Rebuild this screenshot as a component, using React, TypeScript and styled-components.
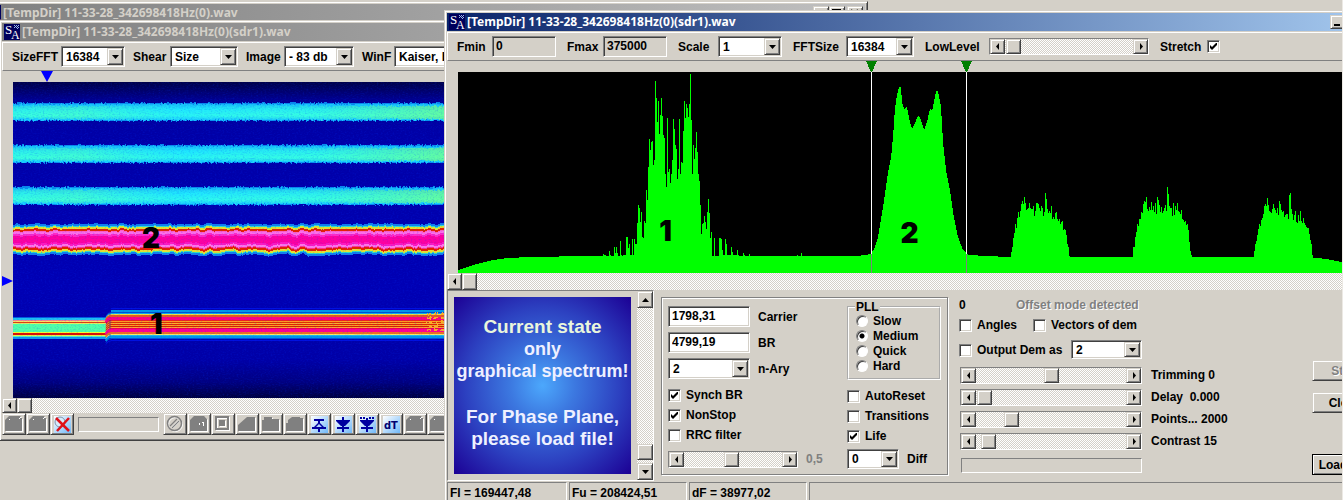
import React, { useId } from "react";
import styled, { createGlobalStyle, css } from "styled-components";

const face = "#d4d0c8";
const shadow = "#808080";
const dark = "#404040";
const uiFont = '"Liberation Sans", Arial, sans-serif';
const titleFont = '"Noto Sans", "DejaVu Sans Condensed", sans-serif';

const raised = css`
  border: 1px solid;
  border-color: ${face} ${dark} ${dark} ${face};
  box-shadow: inset 1px 1px 0 #fff, inset -1px -1px 0 ${shadow};
  background: ${face};
`;
const sunken = css`
  border: 1px solid;
  border-color: ${shadow} #fff #fff ${shadow};
  box-shadow: inset 1px 1px 0 ${dark}, inset -1px -1px 0 ${face};
`;
const dither = css`
  background: repeating-conic-gradient(#fff 0 25%, ${face} 0 50%) 0 0 / 2px 2px;
`;

const GlobalStyle = createGlobalStyle`
  * { box-sizing: border-box; }
  body { margin: 0; background: ${face}; font: bold 12px/14px ${uiFont}; color: #000; }
  button, input, select { font: inherit; color: inherit; margin: 0; }
`;

/* ---------- windows ---------- */

const Desktop = styled.main`
  position: relative;
  height: 100vh;
  overflow: hidden;
  border-right: 1px solid #ece9e4;
`;

const WindowFrame = styled.section`
  position: absolute;
  display: flex;
  flex-direction: column;
  padding: 2px;
  border: 1px solid;
  border-color: ${face} ${dark} ${dark} ${face};
  box-shadow: inset 1px 1px 0 #fff, inset -1px -1px 0 ${shadow};
  background: ${face};
`;
const RootWindow = styled(WindowFrame)`
  left: -20px;
  top: 1px;
  width: calc(65% + 16px);
  height: 400px;
`;
const WaterfallWindow = styled(WindowFrame)`
  left: -1px;
  top: 20px;
  width: 64%;
`;
const SpectrumWindow = styled(WindowFrame)`
  left: 444px;
  right: -43px;
  top: 10px;
`;

const TitleBar = styled.header<{ $active?: boolean }>`
  display: flex;
  align-items: center;
  gap: 2px;
  height: 18px;
  margin-bottom: 1px;
  padding: 0 2px;
  background: ${(p) =>
    p.$active
      ? "linear-gradient(90deg, #0a246a, #a6caf0)"
      : "linear-gradient(90deg, #808080, #c0c0c0)"};
  color: ${(p) => (p.$active ? "#fff" : face)};
`;
const TitleText = styled.h1`
  flex: 1;
  margin: 0;
  font: bold 12px/18px ${titleFont};
  white-space: nowrap;
`;
const CaptionButton = styled.button`
  ${raised}
  width: 16px;
  height: 14px;
  padding: 0;
  display: grid;
  place-items: center;
  color: #000;
`;
const CaptionGroup = styled.div`
  display: flex;
`;

const AppIcon = () => (
  <svg width="16" height="16" viewBox="0 0 16 16" aria-hidden="true">
    <rect width="16" height="16" fill="#00005c" />
    <text x="1" y="10" fontFamily="Liberation Serif, serif" fontSize="13" fontWeight="400" fill="#fff">S</text>
    <text x="7" y="15" fontFamily="Liberation Serif, serif" fontSize="12" fontWeight="400" fill="#fff">A</text>
    <path d="M10 1h1v1h-1zM12 1h1v1h-1zM14 1h1v1h-1zM11 2h1v1h-1zM13 2h1v1h-1zM10 3h1v1h-1zM12 3h1v1h-1zM14 3h1v1h-1zM13 4h1v1h-1z" fill="#9ab8e8" />
  </svg>
);

const Title = ({ text, active }: { text: string; active?: boolean }) => (
  <TitleBar $active={active}>
    <AppIcon />
    <TitleText>{text}</TitleText>
    <CaptionGroup>
      <CaptionButton aria-label="Minimize">
        <svg width="10" height="9"><path d="M1 6h6v2H1z" /></svg>
      </CaptionButton>
      <CaptionButton aria-label="Maximize">
        <svg width="10" height="9"><path d="M0 0h9v9H0zM1 2v6h7V2z" fillRule="evenodd" /></svg>
      </CaptionButton>
    </CaptionGroup>
    <CaptionButton aria-label="Close">
      <svg width="10" height="9"><path d="M1 1l7 7M8 1l-7 7" stroke="#000" strokeWidth="2" /></svg>
    </CaptionButton>
  </TitleBar>
);

/* ---------- controls ---------- */

const Toolbar = styled.div<{ $gap: number }>`
  display: flex;
  align-items: center;
  gap: ${(p) => p.$gap}px;
  height: 29px;
  padding-left: 9px;
  border: 1px solid;
  border-color: #fff ${shadow} ${shadow} #fff;
  overflow: hidden;
`;
const Field = styled.label<{ $label: number }>`
  display: grid;
  flex: none;
  grid-template-columns: ${(p) => p.$label}px auto;
  align-items: center;
  white-space: nowrap;
`;
const FieldAfter = styled.label`
  display: flex;
  align-items: center;
  gap: 8px;
  white-space: nowrap;
`;
const TextInput = styled.input<{ $w: number; $flat?: boolean }>`
  ${sunken}
  width: ${(p) => p.$w}px;
  height: 21px;
  padding: 0 3px 2px;
  border-radius: 0;
  outline: none;
  background: ${(p) => (p.$flat ? face : "#fff")};
`;
const SelectWrap = styled.span<{ $w: number; $h: number }>`
  ${sunken}
  display: grid;
  grid-template-columns: 1fr 16px;
  flex: none;
  width: ${(p) => p.$w}px;
  height: ${(p) => p.$h}px;
  padding: 1px;
  background: #fff;
  select {
    grid-area: 1 / 1 / 2 / 3;
    appearance: none;
    border: 0;
    outline: none;
    padding: 0 0 0 3px;
    background: transparent;
    border-radius: 0;
    min-width: 0;
  }
`;
const SelectArrow = styled.span`
  ${raised}
  grid-area: 1 / 2;
  display: grid;
  place-items: center;
  pointer-events: none;
`;
const Select = ({ w, h = 21, value, label }: { w: number; h?: number; value: string; label?: string }) => (
  <SelectWrap $w={w} $h={h}>
    <select defaultValue={value} aria-label={label}>
      <option>{value}</option>
    </select>
    <SelectArrow>
      <svg width="7" height="4"><path d="M0 0h7L3.500 4z" /></svg>
    </SelectArrow>
  </SelectWrap>
);

const CheckBoxBox = styled.span`
  display: grid;
  flex: none;
  width: 13px;
  height: 13px;
  input {
    ${sunken}
    grid-area: 1 / 1;
    appearance: none;
    width: 13px;
    height: 13px;
    background: #fff;
  }
  svg {
    grid-area: 1 / 1;
    place-self: center;
    pointer-events: none;
    visibility: hidden;
  }
  input:checked + svg {
    visibility: visible;
  }
`;
const CheckLabel = styled.label<{ $reverse?: boolean; $h?: number }>`
  display: flex;
  flex-direction: ${(p) => (p.$reverse ? "row-reverse" : "row")};
  align-items: center;
  gap: ${(p) => (p.$reverse ? 6 : 5)}px;
  height: ${(p) => p.$h ?? 20}px;
  white-space: nowrap;
`;
const Check = ({ text, on, reverse, h }: { text: string; on?: boolean; reverse?: boolean; h?: number }) => (
  <CheckLabel $reverse={reverse} $h={h}>
    <CheckBoxBox>
      <input type="checkbox" defaultChecked={on} />
      <svg width="7" height="7"><path d="M0 2v3l2 2 5-5V-1L2 4z" /></svg>
    </CheckBoxBox>
    {text}
  </CheckLabel>
);

const RadioLabel = styled.label`
  display: flex;
  align-items: center;
  gap: 5px;
  height: 15px;
  input {
    appearance: none;
    width: 12px;
    height: 12px;
    border-radius: 50%;
    border: 1px solid;
    border-color: ${shadow} #fff #fff ${shadow};
    box-shadow: inset 1px 1px 0 ${dark};
    background: #fff;
  }
  input:checked {
    background: radial-gradient(circle, #000 0 2px, #fff 3px);
  }
`;

const Scroll = styled.div<{ $vertical?: boolean; $h?: number; $w?: number; $framed?: boolean }>`
  display: flex;
  flex: none;
  flex-direction: ${(p) => (p.$vertical ? "column" : "row")};
  ${(p) => p.$w && `width: ${p.$w}px;`}
  ${(p) => p.$h && `height: ${p.$h}px;`}
  ${dither}
  ${(p) =>
    p.$framed &&
    css`
      border: 1px solid;
      border-color: ${shadow} #fff #fff ${shadow};
    `}
  button {
    ${raised}
    flex: none;
    width: 15px;
    min-height: 15px;
    padding: 0;
    display: grid;
    place-items: center;
    ${(p) => p.$vertical && "width: 100%; height: 17px;"}
  }
  input {
    appearance: none;
    flex: 1;
    min-width: 0;
    min-height: 0;
    background: transparent;
    outline: none;
    ${(p) => p.$vertical && "writing-mode: vertical-lr; width: 16px;"}
  }
  input::-webkit-slider-runnable-track {
    height: 100%;
    ${(p) => p.$vertical && "width: 100%;"}
  }
  input::-webkit-slider-thumb {
    appearance: none;
    ${raised}
    width: ${(p) => (p.$vertical ? "16px" : "15px")};
    height: ${(p) => (p.$vertical ? "16px" : "100%")};
  }
`;
const arrows = {
  left: "M3 0v7L0 3.500z",
  right: "M1 0v7L4 3.500z",
  up: "M0 4h7L3.500 0z",
  down: "M0 0h7L3.500 4z",
};
const Arrow = ({ dir }: { dir: keyof typeof arrows }) => {
  const vertical = dir === "up" || dir === "down";
  return (
    <svg width={vertical ? 7 : 4} height={vertical ? 4 : 7}>
      <path d={arrows[dir]} />
    </svg>
  );
};
type BarProps = { label: string; value: number; w?: number; h?: number; vertical?: boolean; framed?: boolean };
const ScrollBar = ({ label, value, w, h, vertical, framed }: BarProps) => (
  <Scroll $w={w} $h={h} $vertical={vertical} $framed={framed}>
    <button aria-label={`${label} decrease`}><Arrow dir={vertical ? "up" : "left"} /></button>
    <input type="range" min={0} max={100} defaultValue={value} aria-label={label} />
    <button aria-label={`${label} increase`}><Arrow dir={vertical ? "down" : "right"} /></button>
  </Scroll>
);

/* ---------- waterfall window ---------- */

const TopMarker = styled.div`
  height: 11px;
  padding-left: 39px;
  svg { display: block; }
`;
const WaterfallRow = styled.div`
  display: grid;
  grid-template-columns: 11px 1fr;
  height: 316px;
`;
const SideMarker = styled.svg`
  align-self: start;
  margin-top: 194px;
`;
const Plot = styled.div`
  position: relative;
  min-width: 0;
  svg { display: block; width: 100%; }
`;
const PlotLabel = styled.span<{ $x: string; $y: number }>`
  position: absolute;
  left: ${(p) => p.$x};
  top: ${(p) => p.$y}px;
  font: 900 28px/28px Inter, "Liberation Sans", sans-serif;
`;
const IconRow = styled.div`
  display: flex;
  align-items: center;
  height: 22px;
  margin-bottom: 3px;
  overflow: hidden;
`;
const IconButton = styled.button`
  ${raised}
  display: grid;
  place-items: center;
  flex: none;
  width: 24px;
  height: 22px;
  padding: 0;
`;
const Progress = styled.div<{ $m?: number; $w: number }>`
  flex: none;
  width: ${(p) => p.$w}px;
  height: 15px;
  margin: 0 ${(p) => p.$m ?? 0}px;
  border: 1px solid;
  border-color: ${shadow} #fff #fff ${shadow};
`;

type Stripe = [y: number, h: number, color: string];
const fskLeft: Stripe[] = [
  [235, 1, "#0060e0"], [236, 2, "#20c0f0"], [238, 1, "#f08090"], [239, 1, "#ffe060"], [240, 1, "#e04010"],
  [241, 1, "#e8f060"], [242, 8, "#50ffa8"], [250, 1, "#f0ff30"], [251, 2, "#e01000"], [253, 1, "#f0f040"],
  [254, 1, "#50f0c0"], [255, 2, "#1098f0"],
];
const fskRight: Stripe[] = [
  [226, 1, "#0010e0"], [228, 2, "#0098e8"], [230, 1, "#0050d0"], [231, 1, "#10a8f0"], [232, 1, "#f0e040"],
  [233, 2, "#e85820"], [235, 3, "#ff0080"], [238, 1, "#f02020"], [239, 1, "#ffa020"], [240, 1, "#e03000"],
  [241, 1, "#ffb030"], [242, 1, "#e02800"], [243, 1, "#ffa020"], [244, 1, "#d82000"], [245, 1, "#ffa830"],
  [246, 1, "#f00050"], [247, 3, "#ff0090"], [250, 2, "#f07020"], [252, 1, "#ffe860"], [253, 1, "#20b8e8"],
  [254, 2, "#0098e8"], [256, 1, "#0050d8"], [258, 1, "#0010e0"],
];
const pskBand: Stripe[] = [
  [142, 2, "#1080f0"], [144, 1, "#30e0d0"], [145, 2, "#e8e030"], [147, 2, "#e82000"], [149, 1, "#ff60c8"],
  [150, 2, "#ff70e8"], [152, 2, "#ff28c8"], [154, 7, "#ff00a0"], [161, 2, "#ff18c0"], [163, 2, "#ff78e8"],
  [165, 1, "#ff3090"], [166, 2, "#e82000"], [168, 2, "#e8e030"], [170, 1, "#30e0c0"], [171, 2, "#1080f0"],
];

const Stripes = ({ data, x = 0, width = "100%" }: { data: Stripe[]; x?: number; width?: number | string }) => (
  <>
    {data.map(([y, h, c]) => (
      <rect key={y} x={x} y={y} width={width} height={h} fill={c} />
    ))}
  </>
);

const Waterfall = () => {
  const id = useId().replace(/:/g, "");
  return (
    <svg height="316" role="img" aria-label="Waterfall">
      <defs>
        <linearGradient id={`${id}bg`} x2="0" y2="1">
          <stop offset="0" stopColor="#000048" />
          <stop offset="0.060" stopColor="#000094" />
          <stop offset="0.150" stopColor="#0000a6" />
          <stop offset="0.650" stopColor="#0000b4" />
          <stop offset="0.880" stopColor="#0000a6" />
          <stop offset="0.950" stopColor="#000080" />
          <stop offset="1" stopColor="#000040" />
        </linearGradient>
        <linearGradient id={`${id}cy`} x2="0" y2="1">
          <stop offset="0" stopColor="#0070e8" />
          <stop offset="0.080" stopColor="#18c0f8" />
          <stop offset="0.350" stopColor="#1eecff" />
          <stop offset="0.700" stopColor="#2cfff0" />
          <stop offset="0.920" stopColor="#18d0ff" />
          <stop offset="1" stopColor="#0070e8" />
        </linearGradient>
        <linearGradient id={`${id}gr`} gradientUnits="userSpaceOnUse" x1="0" x2="431">
          <stop offset="0" stopColor="#70ff90" stopOpacity="0.150" />
          <stop offset="0.150" stopColor="#70ff90" stopOpacity="0.300" />
          <stop offset="0.400" stopColor="#20d0ff" stopOpacity="0.200" />
          <stop offset="0.700" stopColor="#70ff90" stopOpacity="0.150" />
          <stop offset="1" stopColor="#90ff60" stopOpacity="0.550" />
        </linearGradient>
        <filter id={`${id}grain`} x="0" y="0" width="100%" height="100%" colorInterpolationFilters="sRGB">
          <feTurbulence type="fractalNoise" baseFrequency="0.500 0.800" numOctaves="2" seed="4" />
          <feColorMatrix values="0 0 0 0 0  0 0 0 0 0.200  0 0 0 0 1  2.200 0 0 0 -1" />
        </filter>
        <filter id={`${id}rough`} x="0" y="0" width="100%" height="100%" colorInterpolationFilters="sRGB">
          <feTurbulence type="fractalNoise" baseFrequency="0.150 0.020" numOctaves="3" seed="7" result="n" />
          <feDisplacementMap in="SourceGraphic" in2="n" scale="5" xChannelSelector="R" yChannelSelector="G" />
        </filter>
        <filter id={`${id}fuzz`} x="0" y="0" width="100%" height="100%" colorInterpolationFilters="sRGB">
          <feTurbulence type="fractalNoise" baseFrequency="0.600 0.500" numOctaves="2" seed="2" result="n" />
          <feDisplacementMap in="SourceGraphic" in2="n" scale="4" xChannelSelector="R" yChannelSelector="G" />
        </filter>
      </defs>
      <rect width="100%" height="316" fill={`url(#${id}bg)`} />
      <g filter={`url(#${id}fuzz)`}>
        <rect width="100%" height="316" fill="none" />
        {[21, 63, 105].map((y) => (
          <g key={y}>
            <rect x="-10" y={y} width="110%" height="18" fill={`url(#${id}cy)`} />
            <rect x="-10" y={y + 3} width="110%" height="13" fill={`url(#${id}gr)`} />
          </g>
        ))}
      </g>
      <g filter={`url(#${id}rough)`}>
        <rect width="100%" height="316" fill="none" />
        <Stripes data={pskBand} x={-10} width="110%" />
      </g>
      <Stripes data={fskLeft} width={93} />
      <Stripes data={fskRight} x={98} />
      <g fill="none">
        {fskRight.slice(2).map(([y, h, c]) => (
          <path key={y} d={`M93 ${y + h / 2 + 4}q1 -4 6 -4h4`} stroke={c} strokeWidth={h} />
        ))}
      </g>
      <g filter={`url(#${id}fuzz)`}>
        <rect x="412" y="230" width="40" height="24" fill="none" />
        {[232, 236, 240, 244, 248].map((y) => (
          <path key={y} d={`M414 ${y}h60`} stroke="#ffb020" strokeWidth="2" strokeDasharray="4 3" />
        ))}
      </g>
      <rect width="100%" height="316" filter={`url(#${id}grain)`} opacity="0.220" />
    </svg>
  );
};

const Emboss = ({ d }: { d: string }) => (
  <svg width="18" height="18" viewBox="0 0 18 18" aria-hidden="true">
    <path d={d} fill="#fff" transform="translate(1 1)" />
    <path d={d} fill={shadow} />
  </svg>
);
const blobs = {
  page: "M4 1h11l1 1v1h1v13H0V5z",
  cut: "M0 16V10l9-8h8v14z",
  folder: "M0 16V5h2V2h8v2h7v12z",
  shape: "M0 16V8h2V5l4-3h8v1h3v13z",
};
const PageIcon = () => (
  <svg width="18" height="18" viewBox="0 0 18 18" aria-hidden="true">
    <path d={blobs.page} fill="#fff" transform="translate(1 1)" />
    <path d={blobs.page} fill={shadow} />
    <path d="M4 4h1v1H4zM14 3h1v1h-1zM15 2h1v1h-1z" fill="#fff" />
  </svg>
);
const BlueTile = ({ children }: { children: React.ReactNode }) => {
  const id = useId().replace(/:/g, "");
  return (
    <svg width="17" height="17" viewBox="0 0 17 17" aria-hidden="true">
      <linearGradient id={id} x1="0" y1="0" x2="1" y2="1">
        <stop offset="0" stopColor="#fff" />
        <stop offset="1" stopColor="#70b8f8" />
      </linearGradient>
      <rect width="17" height="17" fill={`url(#${id})`} />
      {children}
    </svg>
  );
};
const navy = "#0000a0";
const icons: [string, React.ReactNode][] = [
  ["Stop", (
    <svg width="18" height="18" viewBox="0 0 18 18" fill="none">
      <g stroke="#fff" transform="translate(1 1)"><circle cx="8.500" cy="8.500" r="7" /><path d="M5 12l7-7" strokeWidth="2" /></g>
      <g stroke={shadow}><circle cx="8.500" cy="8.500" r="7" strokeWidth="1.500" /><path d="M4 11l7-7M6 13l7-7" strokeWidth="1.200" /></g>
    </svg>
  )],
  ["Write", (
    <svg width="18" height="18" viewBox="0 0 18 18">
      <path d="M1 17V6l4-4h10l3 3v12z" fill="#fff" />
      <path d="M0 16V5l4-4h10l3 3v12z" fill={shadow} /><path d="M9 8h1v2H9zM13 7h1v4h-1zM12 7h1v1h-1z" fill="#fff" />
    </svg>
  )],
  ["Frame", (
    <svg width="18" height="18" viewBox="0 0 18 18">
      <path d="M1 1h14v14H1zM3 3v10h10V3z" fill="#fff" fillRule="evenodd" transform="translate(1 1)" />
      <path d="M1 1h14v14H1zM3 3v10h10V3z" fill={shadow} fillRule="evenodd" />
      <path d="M6 6h6v6H6z" fill="#fff" /><path d="M5 5h6v6H5z" fill={shadow} />
    </svg>
  )],
  ["Cut", <Emboss d={blobs.cut} />],
  ["Open", <Emboss d={blobs.folder} />],
  ["Shape", <Emboss d={blobs.shape} />],
  ["Up", (
    <BlueTile>
      <path d="M3 3h10v2H9v2l4 4h2v2H9v3H7v-3H1v-2h2l4-4V5H3zM8 8l-3 3h6z" fill={navy} fillRule="evenodd" />
    </BlueTile>
  )],
  ["Down", <BlueTile><path d="M7 1h2v3h6v1l-5 5H9v1h5v2H9v3H7v-3H2v-2h5v-1H6L1 5V4h6z" fill={navy} /></BlueTile>],
  ["Down all", (
    <BlueTile>
      <path d="M1 1h2v2H1zM4 1h2v2H4zM10 1h2v2h-2zM13 1h2v2h-2zM7 2h2v2h6v1l-5 5H9v1h5v2H9v3H7v-3H2v-2h5v-1H6L1 5V4h6z" fill={navy} />
    </BlueTile>
  )],
  ["dT", (
    <BlueTile>
      <text x="1" y="13" fontFamily="DejaVu Sans Condensed, sans-serif" fontWeight="700" fontSize="11" fill="#000070">dT</text>
    </BlueTile>
  )],
  ["Save", <PageIcon />],
  ["Copy", <PageIcon />],
];

/* ---------- spectrum window ---------- */

const BASE = 185;
// Top edge of each trace, one value per pixel column, keyed by the first column.
const columns: [start: number, tops: number[]][] = [
  [145, [182, 183, 183, 184, 184, 184, 179, 183, 184, 184, 184, 175, 181, 175, 181, 184, 184, 169, 183, 184, 183, 183, 183, 165, 165, 176, 172, 183, 183, 167, 183]],
  [176, [167, 172, 172, 151, 133, 136, 150, 140, 165, 166, 149, 151, 118, 128, 95, 67, 78, 70, 69, 93, 88, 9, 26, 50, 29, 62, 43, 26, 44, 63, 66, 102, 115, 46, 100, 97, 111, 102, 88, 47, 57, 73, 77, 107, 97, 47, 102, 90, 91, 59, 29, 46, 32, 36, 45, 32, 2, 48, 102, 73, 87, 76, 60, 80, 102, 109, 133, 162, 152, 151, 144, 150, 157, 140, 127, 141, 166, 160, 184, 184, 166, 184, 184, 184, 184, 166, 166, 167, 178, 183, 183, 167, 172, 183, 183, 183, 183, 175, 180, 183, 183, 183, 183, 178, 183, 184, 184, 184, 184, 181, 183, 184, 184, 184, 184, 182, 184, 184, 184, 184, 184, 184, 184, 184]],
  [337, [184, 184, 183, 184, 184, 184, 181, 184, 184, 184, 184, 184]],
  [553, [180, 175, 166, 161, 152, 156, 146, 140, 145, 139, 132, 129, 132, 125, 131, 138, 137, 136, 131, 136, 137, 137, 134, 144, 139, 131, 131, 132, 136, 139, 134, 136, 144, 140, 121, 127, 137, 141, 139, 141, 134, 147, 145, 147, 141, 140, 147, 149, 147, 152, 150, 149, 158, 157, 158, 163, 172, 175, 184]],
  [675, [175, 175, 165, 160, 152, 154, 147, 147, 140, 141, 132, 129, 130, 125, 137, 139, 135, 138, 130, 138, 134, 140, 131, 142, 125, 128, 133, 140, 135, 141, 139, 136, 133, 139, 115, 122, 134, 136, 136, 144, 131, 143, 134, 138, 131, 139, 140, 142, 138, 147, 148, 150, 149, 153, 152, 158, 170, 179, 183]],
  [796, [179, 172, 169, 163, 157, 152, 154, 148, 146, 142, 134, 132, 134, 126, 133, 139, 140, 141, 137, 132, 136, 138, 141, 136, 143, 129, 132, 138, 140, 139, 145, 143, 142, 142, 147, 123, 121, 137, 142, 148, 143, 139, 150, 151, 143, 149, 139, 149, 151, 146, 151, 153, 155, 156, 156, 162, 168, 172, 183]],
];
const columnPath = columns
  .map(([x, tops]) => `M${x} 201` + tops.map((t) => `V${t}h1`).join("") + "V201z")
  .join("");
const floorPath =
  `M0 201V198L15 193L35 188L50 186L72 ${BASE}L130 184H400L413 182L417 175L420 165L425 135L430 101L433 86L435 65L437 36` +
  "L439 23L441 15H443L444 30L446 37L449 35L451 46L454 57L457 51L460 44L462 45L466 58L469 50L472 37L474 39L476 30L478 19" +
  `L480 19L483 35L485 70L488 98L492 118L495 140L500 165L505 178L510 183L530 184L550 ${BASE}H850L868 187L884 190L924 198V201z`;

const Spectrum = () => (
  <svg height="212" viewBox="0 -11 924 212" preserveAspectRatio="none" role="img" aria-label="Spectrum">
    <rect width="924" height="201" />
    <g fill="#00ff00" shapeRendering="crispEdges">
      <path d={floorPath} />
      <path d={columnPath} />
    </g>
    {[413, 508].map((x) => (
      <g key={x} shapeRendering="crispEdges">
        <path d={`M${x} 0h1v182h-1z`} fill="#fff" />
        <path d={`M${x} 182h1v19h-1z`} fill={shadow} />
        <path d={`M${x - 5} -11h11l-5 11h-1z`} fill="#008000" />
      </g>
    ))}
  </svg>
);
const SpectrumArea = styled(Plot)`
  padding-left: 11px;
`;

const Controls = styled.div`
  display: flex;
  height: 191px;
  margin-bottom: 1px;
`;
const PreviewPane = styled.div`
  display: flex;
  flex: none;
  justify-content: space-between;
  width: 207px;
  padding-left: 6px;
  border: 1px solid;
  border-color: ${shadow} #fff #fff ${shadow};
`;
const Preview = styled.div`
  width: 177px;
  height: 177px;
  margin-top: 6px;
  padding-top: 19px;
  background: radial-gradient(circle at 50% 50%, #4ca8fc 0, #3c78e0 26%, #2c40c0 62%, #1c0094 100%);
  color: #eef0ff;
  text-align: center;
  white-space: nowrap;
`;
const PreviewText = styled.p<{ $big?: boolean; $tint?: boolean }>`
  margin: 0;
  font-size: ${(p) => (p.$big ? 19 : 18)}px;
  line-height: 22px;
  color: ${(p) => (p.$tint ? "#eaf6dc" : "inherit")};
`;
const PreviewNote = styled(PreviewText)`
  margin-top: 24px;
`;
const DemodGroup = styled.div`
  display: grid;
  flex: none;
  grid-template-columns: 179px 94px;
  align-content: start;
  width: 287px;
  height: 178px;
  margin: 7px 0 0 7px;
  padding: 0 6px;
  border: 1px solid ${shadow};
  box-shadow: inset 1px 1px 0 #fff, 1px 1px 0 #fff;
`;
const LeftColumn = styled.div`
  padding-top: 8px;
`;
const RightColumn = styled.div`
  padding-top: 3px;
`;
const InputStack = styled.div`
  display: flex;
  flex-direction: column;
  gap: 5px;
  margin-bottom: 6px;
`;
const BottomRow = styled.div`
  display: flex;
  align-items: center;
  gap: 8px;
  height: 20px;
  margin-top: 4px;
  color: ${shadow};
`;
const DiffRow = styled(BottomRow)`
  margin-top: 3px;
  color: #000;
`;
const Pll = styled.fieldset`
  margin: 0 0 6px;
  height: 79px;
  padding: 0 0 0 7px;
  border: 2px groove #fff;
  legend {
    height: 12px;
    margin-left: -1px;
    padding: 0 1px;
    line-height: 12px;
  }
`;
const OutputColumn = styled.div`
  display: flex;
  flex-direction: column;
  margin-left: 11px;
  padding-top: 8px;
`;
const StateRow = styled.div`
  display: grid;
  grid-template-columns: 57px auto;
  height: 14px;
  margin-bottom: 6px;
`;
const Disabled = styled.span`
  color: ${shadow};
  text-shadow: 1px 1px 0 #fff;
`;
const CheckRow = styled.div`
  display: grid;
  grid-template-columns: 74px auto;
  margin-bottom: 8px;
`;
const OutputRow = styled.div`
  display: flex;
  justify-content: space-between;
  width: 183px;
  height: 20px;
  margin-bottom: 7px;
`;
const SliderStack = styled.div`
  display: grid;
  gap: 6px;
  margin-bottom: 9px;
`;
const SliderRow = styled.div`
  display: flex;
  align-items: center;
  gap: 9px;
  height: 16px;
  padding-left: 1px;
  white-space: pre;
`;
const ActionColumn = styled.div`
  display: flex;
  flex-direction: column;
  gap: 11px;
  margin: 70px 4px 0 auto;
`;
const ActionButton = styled.button<{ $primary?: boolean }>`
  ${raised}
  width: 66px;
  height: 21px;
  margin-top: ${(p) => (p.$primary ? 30 : 0)}px;
  padding: 0;
  white-space: nowrap;
  ${(p) => p.$primary && "border-color: #000;"}
  &:disabled {
    color: ${shadow};
    text-shadow: 1px 1px 0 #fff;
  }
`;
const StatusBar = styled.footer`
  display: grid;
  grid-template-columns: 120px 118px 118px 1fr;
  gap: 2px;
`;
const StatusCell = styled.span`
  height: 20px;
  padding: 3px 2px;
  border: 1px solid;
  border-color: ${shadow} #fff #fff ${shadow};
  white-space: nowrap;
`;

export default function App() {
  return (
    <>
      <GlobalStyle />
      <Desktop>
        <RootWindow>
          <Title text="[TempDir] 11-33-28_342698418Hz(0).wav" />
        </RootWindow>

        <WaterfallWindow>
          <Title text="[TempDir] 11-33-28_342698418Hz(0)(sdr1).wav" />
          <Toolbar $gap={8}>
            <Field $label={49}>SizeFFT<Select w={64} value="16384" /></Field>
            <Field $label={37}>Shear<Select w={68} value="Size" /></Field>
            <Field $label={38}>Image<Select w={70} value="- 83 db" /></Field>
            <Field $label={32}>WinF<Select w={110} value="Kaiser, b=8" /></Field>
          </Toolbar>
          <TopMarker>
            <svg width="12" height="11"><path d="M0 0h12L6 11z" fill="#0000ff" /></svg>
          </TopMarker>
          <WaterfallRow>
            <SideMarker width="11" height="11"><path d="M0 0v10l11-5z" fill="#0000ff" /></SideMarker>
            <Plot>
              <Waterfall />
              <PlotLabel $x="129px" $y={142}>2</PlotLabel>
              <PlotLabel $x="137px" $y={228}>1</PlotLabel>
            </Plot>
          </WaterfallRow>
          <ScrollBar label="Time" value={0} h={15} />
          <IconRow>
            <IconButton aria-label="Open file"><PageIcon /></IconButton>
            <IconButton aria-label="Save file"><PageIcon /></IconButton>
            <IconButton aria-label="Clear">
              <BlueTile>
                <circle cx="6" cy="6" r="5" fill="#d8ecfc" stroke="#8090a8" />
                <path d="M2 2l13 13M15 2L3 15" stroke="#e01018" strokeWidth="2.500" />
              </BlueTile>
            </IconButton>
            <Progress $w={81} $m={4} />
            {icons.map(([name, icon]) => (
              <IconButton key={name} aria-label={name}>{icon}</IconButton>
            ))}
          </IconRow>
        </WaterfallWindow>

        <SpectrumWindow>
          <Title active text="[TempDir] 11-33-28_342698418Hz(0)(sdr1).wav" />
          <Toolbar $gap={11}>
            <Field $label={35}>Fmin<TextInput $w={64} $flat readOnly value="0" /></Field>
            <Field $label={36}>Fmax<TextInput $w={64} $flat readOnly value="375000" /></Field>
            <Field $label={40}>Scale<Select w={64} value="1" /></Field>
            <Field $label={53}>FFTSize<Select w={68} value="16384" /></Field>
            <Field as="div" $label={64}>LowLevel<ScrollBar label="LowLevel" value={1} w={160} h={17} framed /></Field>
            <Check text="Stretch" on reverse />
          </Toolbar>
          <SpectrumArea>
            <Spectrum />
            <PlotLabel $x="22.700%" $y={156}>1</PlotLabel>
            <PlotLabel $x="48.500%" $y={158}>2</PlotLabel>
          </SpectrumArea>
          <ScrollBar label="Frequency" value={0} h={17} />
          <Controls>
            <PreviewPane>
              <Preview>
                <PreviewText $big $tint>Current state</PreviewText>
                <PreviewText>only<br />graphical spectrum!</PreviewText>
                <PreviewNote $big>For Phase Plane,<br />please load file!</PreviewNote>
              </Preview>
              <ScrollBar label="Zoom" value={98} w={16} vertical />
            </PreviewPane>
            <DemodGroup>
              <LeftColumn>
                <InputStack>
                  <FieldAfter><TextInput $w={82} defaultValue="1798,31" />Carrier</FieldAfter>
                  <FieldAfter><TextInput $w={82} defaultValue="4799,19" />BR</FieldAfter>
                  <FieldAfter><Select w={82} value="2" />n-Ary</FieldAfter>
                </InputStack>
                <Check text="Synch BR" on />
                <Check text="NonStop" on />
                <Check text="RRC filter" />
                <BottomRow><ScrollBar label="Roll-off" value={48} w={130} h={17} framed />0,5</BottomRow>
              </LeftColumn>
              <RightColumn>
                <Pll>
                  <legend>PLL</legend>
                  {["Slow", "Medium", "Quick", "Hard"].map((name) => (
                    <RadioLabel key={name}>
                      <input type="radio" name="pll" defaultChecked={name === "Medium"} />
                      {name}
                    </RadioLabel>
                  ))}
                </Pll>
                <Check text="AutoReset" />
                <Check text="Transitions" />
                <Check text="Life" on />
                <DiffRow as="label"><Select w={52} h={20} value="0" />Diff</DiffRow>
              </RightColumn>
            </DemodGroup>
            <OutputColumn>
              <StateRow><span>0</span><Disabled>Offset mode detected</Disabled></StateRow>
              <CheckRow><Check text="Angles" h={14} /><Check text="Vectors of dem" h={14} /></CheckRow>
              <OutputRow><Check text="Output Dem as" /><Select w={71} h={19} value="2" label="Output Dem as" /></OutputRow>
              <SliderStack>
                <SliderRow><ScrollBar label="Trimming" value={50} w={182} h={17} framed />Trimming 0</SliderRow>
                <SliderRow><ScrollBar label="Delay" value={1} w={182} h={17} framed />{"Delay  0.000"}</SliderRow>
                <SliderRow><ScrollBar label="Points" value={21} w={182} h={17} framed />Points... 2000</SliderRow>
                <SliderRow><ScrollBar label="Contrast" value={4} w={182} h={17} framed />Contrast 15</SliderRow>
              </SliderStack>
              <Progress $w={181} $m={2} />
            </OutputColumn>
            <ActionColumn>
              <ActionButton disabled>Start</ActionButton>
              <ActionButton>Close</ActionButton>
              <ActionButton $primary>Load File</ActionButton>
            </ActionColumn>
          </Controls>
          <StatusBar>
            <StatusCell>Fl = 169447,48</StatusCell>
            <StatusCell>Fu = 208424,51</StatusCell>
            <StatusCell>dF = 38977,02</StatusCell>
            <StatusCell />
          </StatusBar>
        </SpectrumWindow>
      </Desktop>
    </>
  );
}
